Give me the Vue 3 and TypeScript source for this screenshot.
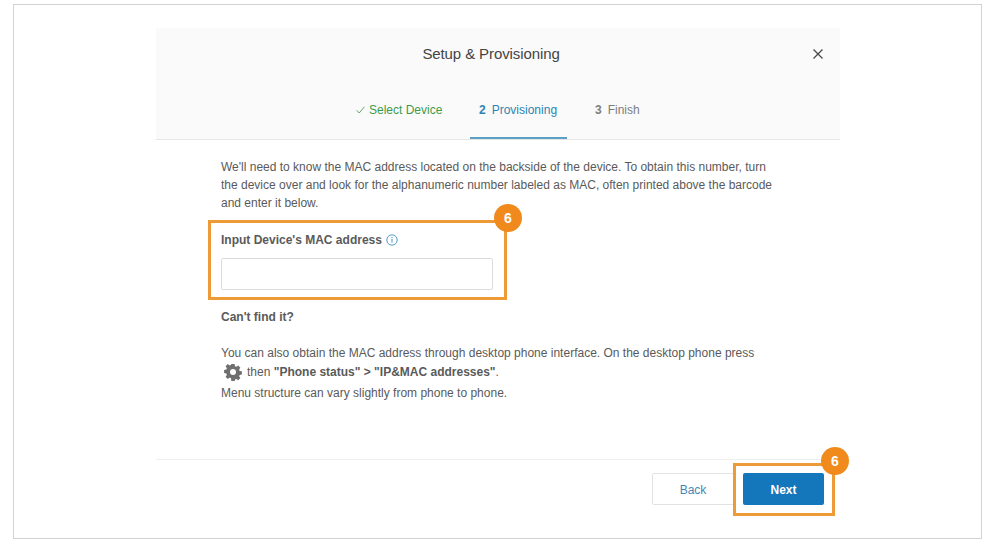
<script setup lang="ts">
const tabs = [
  { key: 'select', mark: '', label: 'Select Device', state: 'done' },
  { key: 'prov', mark: '2', label: 'Provisioning', state: 'active' },
  { key: 'finish', mark: '3', label: 'Finish', state: 'todo' },
]
</script>

<template>
  <div class="frame">
    <section class="modal">
      <header class="head">
        <div class="title-row">
          <h1 class="title">Setup &amp; Provisioning</h1>
          <svg class="close" width="12" height="12" viewBox="0 0 12 12" aria-label="Close">
            <path d="M1.5 1.5l9 9M10.5 1.5l-9 9" stroke="#444" stroke-width="1.2" fill="none" />
          </svg>
        </div>
        <nav class="tabs">
          <div v-for="t in tabs" :key="t.key" class="tab" :class="t.state">
            <svg v-if="t.state === 'done'" width="9" height="8" viewBox="0 0 9 8">
              <path d="M0.8 4.4L3.2 7L8.4 0.8" stroke="#4f9d58" stroke-width="0.9" fill="none" />
            </svg>
            <span v-else class="mark">{{ t.mark }}</span>
            <span>{{ t.label }}</span>
          </div>
        </nav>
      </header>

      <div class="body">
        <p class="intro">
          We'll need to know the MAC address located on the backside of the device. To obtain this number, turn<br />
          the device over and look for the alphanumeric number labeled as MAC, often printed above the barcode<br />
          and enter it below.
        </p>

        <div class="field">
          <label class="label">
            Input Device's MAC address
            <svg class="info" width="12" height="12" viewBox="0 0 12 12">
              <circle cx="6" cy="6" r="5.2" stroke="#3f93bd" stroke-width="0.9" fill="none" />
              <path d="M6 5v3.6M6 3v1.1" stroke="#3f93bd" stroke-width="1" fill="none" />
            </svg>
          </label>
          <div class="input"></div>
          <div class="callout callout-field"><span class="badge">6</span></div>
        </div>

        <h2 class="cant">Can't find it?</h2>

        <p class="line first">You can also obtain the MAC address through desktop phone interface. On the desktop phone press</p>
        <p class="line second">
          <svg class="gear" width="18" height="18" viewBox="0 0 18 18">
            <path
              fill="#6f6f6f"
              fill-rule="evenodd"
              d="M7.4 1h3.2l.4 2.2 1.3.6 1.9-1.3 2.2 2.2-1.3 1.9.6 1.3 2.2.4v3.2l-2.2.4-.6 1.3 1.3 1.9-2.2 2.2-1.9-1.3-1.3.6-.4 2.2H7.4L7 15.2l-1.3-.6-1.9 1.3-2.2-2.2 1.3-1.9-.6-1.3-2.2-.4V6.9L2.3 6.5l.6-1.3-1.3-1.9 2.2-2.2 1.9 1.3L7 1.8zM9 6a3 3 0 1 0 0 6 3 3 0 0 0 0-6z"
            />
          </svg>
          <span>then <b>"Phone status" &gt; "IP&amp;MAC addresses"</b>.</span>
        </p>
        <p class="line third">Menu structure can vary slightly from phone to phone.</p>
      </div>

      <footer class="foot">
        <button class="btn back">Back</button>
        <div class="next-wrap">
          <button class="btn next">Next</button>
          <div class="callout callout-next"><span class="badge">6</span></div>
        </div>
      </footer>
    </section>
  </div>
</template>

<style scoped>
.frame {
  box-sizing: border-box;
  width: 969px;
  height: 535px;
  margin: 4px 0 0 13px;
  padding: 23px 0 0 142px;
  border: 1px solid #d2d2d2;
  background: #fff;
  font-family: "Liberation Sans", Arial, sans-serif;
  color: #5a5a5a;
}
.modal {
  width: 684px;
}
.head {
  box-sizing: border-box;
  height: 112px;
  background: #fafafa;
  border-bottom: 1px solid #e6e6e6;
}
.title-row {
  display: flex;
  align-items: center;
  justify-content: center;
  position: relative;
  height: 50px;
  padding-right: 14px;
}
.title {
  margin: 0;
  font-size: 15px;
  font-weight: 400;
  letter-spacing: -0.1px;
  color: #444;
}
.close {
  position: absolute;
  right: 16px;
  top: 20px;
}
.tabs {
  display: flex;
  margin: 8px 0 0 200px;
}
.tab {
  box-sizing: border-box;
  height: 53px;
  display: flex;
  align-items: center;
  gap: 6px;
  font-size: 12px;
  padding-bottom: 5px;
}
.tab.done {
  width: 114px;
  color: #3f9a4a;
  gap: 4px;
}
.tab.active {
  width: 97px;
  padding-left: 9px;
  color: #2a85b5;
  border-bottom: 2px solid #5a9fc6;
  padding-bottom: 3px;
}
.tab.todo {
  margin-left: 28px;
  color: #7d7d7d;
}
.tab .mark {
  font-weight: 700;
}
.body {
  box-sizing: border-box;
  height: 319px;
  padding: 18px 0 0 65px;
  font-size: 12px;
  color: #5a5a5a;
}
.intro {
  margin: 0;
  line-height: 18px;
}
.field {
  position: relative;
  width: 272px;
  margin-top: 19px;
}
.label {
  display: flex;
  align-items: center;
  gap: 4px;
  font-weight: 700;
  line-height: 18px;
}
.info {
  flex: none;
}
.input {
  box-sizing: border-box;
  height: 32px;
  margin-top: 9px;
  border: 1px solid #dcdcdc;
  border-radius: 2px;
  background: #fff;
}
.callout {
  position: absolute;
  box-sizing: border-box;
  border: 3px solid #ee9a37;
  pointer-events: none;
}
.callout-field {
  left: -13px;
  top: -11px;
  width: 299px;
  height: 80px;
}
.callout-next {
  left: -10px;
  top: -10px;
  width: 102px;
  height: 53px;
}
.badge {
  position: absolute;
  right: -18px;
  top: -19px;
  width: 28px;
  height: 28px;
  border-radius: 50%;
  background: #f08a1d;
  color: #fff;
  font-size: 14px;
  font-weight: 700;
  display: flex;
  align-items: center;
  justify-content: center;
}
.callout-next .badge {
  right: -17px;
  top: -19px;
}
.cant {
  margin: 18px 0 0;
  font-size: 12px;
  font-weight: 700;
  line-height: 18px;
}
.line {
  margin: 0;
  line-height: 18px;
}
.first {
  margin-top: 18px;
}
.second {
  display: flex;
  align-items: center;
  gap: 5px;
  margin-top: 1px;
  padding-left: 3px;
}
.gear {
  flex: none;
}
.third {
  margin-top: 3px;
}
.foot {
  box-sizing: border-box;
  height: 60px;
  display: flex;
  justify-content: flex-end;
  gap: 9px;
  padding: 13px 16px 0 0;
  border-top: 1px solid #eeeeee;
}
.next-wrap {
  position: relative;
  width: 81px;
  height: 32px;
}
.btn {
  box-sizing: border-box;
  width: 82px;
  height: 32px;
  border-radius: 2px;
  font-family: inherit;
  font-size: 12px;
  padding: 1px 0 0;
}
.back {
  background: #fff;
  border: 1px solid #e2e2e2;
  color: #3f86b4;
}
.next {
  width: 81px;
  background: #1477bb;
  border: 0;
  color: #fff;
  font-weight: 700;
}
</style>
